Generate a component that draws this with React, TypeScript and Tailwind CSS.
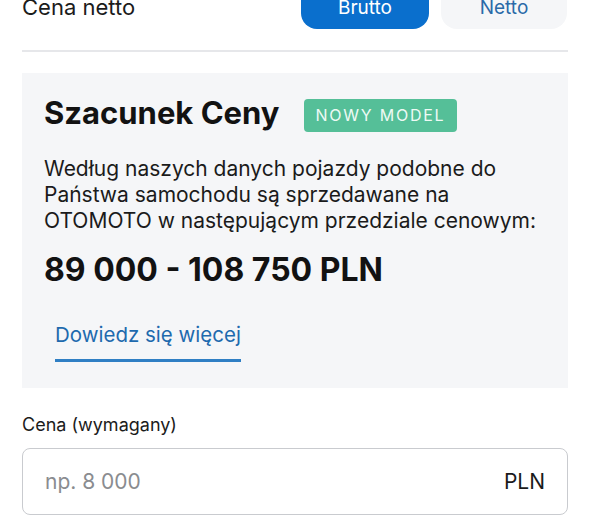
import React from "react";

const font = { fontFamily: 'Inter, "Liberation Sans", Arial, sans-serif' };

const App = () => {
  return (
    <div className="w-[590px] h-[522px] overflow-hidden bg-white px-[22px]" style={font}>
      <div className="-mt-[15px] flex h-[44px] items-center justify-between">
        <span className="text-[22px] text-[#1b1b1b]">Cena netto</span>

        <div className="flex items-center gap-3 pr-px">
          <button className="h-[44px] w-[128px] rounded-[16px] bg-[#0a6fcd] pt-[2px] text-[19px] text-white">
            Brutto
          </button>
          <button className="h-[44px] w-[126px] rounded-[16px] bg-[#f5f6f8] pt-[2px] text-[19px] text-[#2a6aa8]">
            Netto
          </button>
        </div>
      </div>

      <div className="mt-[21px] h-[2px] bg-[#e6e7ea]" />

      <div className="mt-[21px] h-[315px] bg-[#f5f6f8] px-[22px] pt-[20px]">
        <div className="flex items-center gap-[24px]">
          <h2 className="text-[31px] font-bold leading-[36px] text-[#121212]">Szacunek Ceny</h2>
          <span className="mt-[6px] rounded-[4px] bg-[#55bf98] px-[12px] py-[6px] text-[16px] leading-[21px] tracking-[0.11em] text-[#eefaf5]">
            NOWY MODEL
          </span>
        </div>

        <p className="mt-[24px] text-[21px] leading-[26px] text-[#1b1b1b]">
          Według naszych danych pojazdy podobne do
          <br />
          Państwa samochodu są sprzedawane na
          <br />
          OTOMOTO w następującym przedziale cenowym:
        </p>

        <div className="mt-[18px] text-[32px] font-bold leading-[36px] text-[#121212]">89 000 - 108 750 PLN</div>

        <div className="mt-[33px] ml-[11px] inline-flex flex-col">
          <span className="text-[20.5px] leading-[28px] text-[#1e6aae]">Dowiedz się więcej</span>
          <span className="mt-[10px] h-[3px] bg-[#2f7fc4]" />
        </div>
      </div>

      <div className="mt-[26px] text-[18px] leading-[22px] text-[#1b1b1b]">Cena (wymagany)</div>

      <div className="mt-[12px] flex h-[67px] items-center justify-between rounded-[8px] border border-[#c9cbcf] px-[22px]">
        <span className="text-[21px] text-[#8a8c90]">np. 8 000</span>
        <span className="text-[21px] text-[#1b1b1b]">PLN</span>
      </div>
    </div>
  );
};

export default App;
